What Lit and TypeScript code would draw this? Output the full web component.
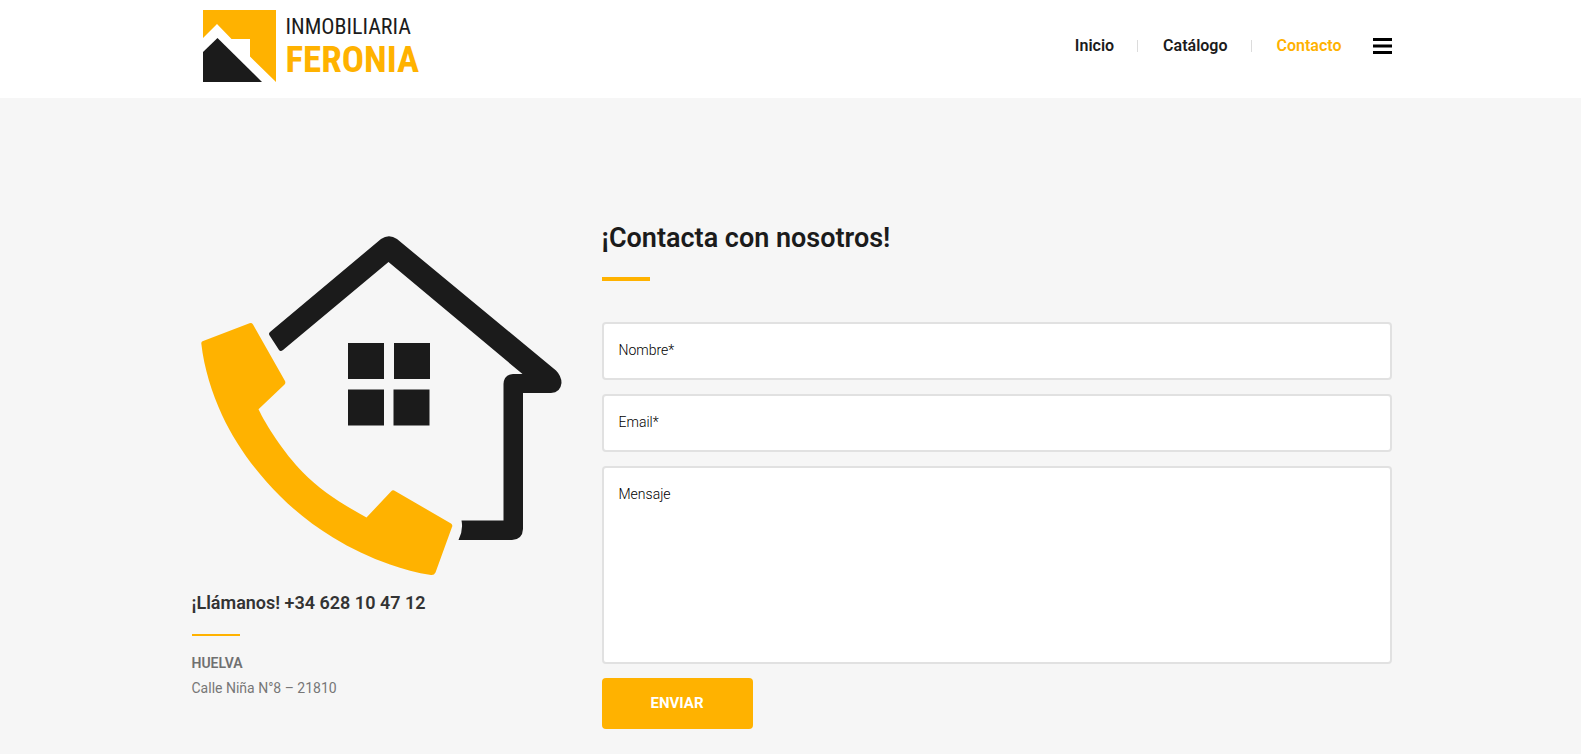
import { LitElement, html, css } from "lit";
import { customElement } from "lit/decorators.js";

@customElement("site-logo")
class SiteLogo extends LitElement {
  static styles = css`
    :host {
      display: block;
    }
    .logo {
      display: flex;
      align-items: center;
      gap: 10px;
      padding-left: 11px;
      text-decoration: none;
    }
    .mark {
      display: block;
      width: 73px;
      height: 72px;
    }
    .words {
      display: flex;
      flex-direction: column;
      font-family: "Liberation Sans Narrow", "Arial Narrow", "Roboto Condensed", Roboto, sans-serif;
      white-space: nowrap;
    }
    .top {
      font-size: 22px;
      line-height: 28px;
      color: #1b1b1b;
    }
    .name {
      font-size: 37px;
      line-height: 38px;
      font-weight: 700;
      color: #ffb200;
    }
  `;

  render() {
    return html`
      <a class="logo" href="#inicio">
        <svg class="mark" viewBox="0 0 73 72" aria-hidden="true">
          <path fill="#ffb200" d="M0 0H73V72L47 46.500V29H28.500L14 14L0 28Z" />
          <path fill="#1b1b1b" d="M0 42L14.500 28L59 72H0Z" />
        </svg>
        <span class="words">
          <span class="top">INMOBILIARIA</span>
          <span class="name">FERONIA</span>
        </span>
      </a>
    `;
  }
}

@customElement("house-phone")
class HousePhone extends LitElement {
  static styles = css`
    :host {
      display: block;
    }
    .art {
      display: block;
      width: 100%;
      height: auto;
    }
  `;

  render() {
    return html`
      <svg class="art" viewBox="192 230 370 350" role="img" aria-label="Casa y teléfono">
        <path
          fill="#1b1b1b"
          d="M270 332L381 239Q389 233.500 397 239L556 370.500Q561.500 376 561.500 383Q560.500 392.500 551 393H523V529Q522.500 539.500 512 540H458.500Q463.500 530 461.500 520.500H503.500V384Q504 374.500 513 374H522.500L388.500 262L283 350Q280.500 352 279 350L269.300 335Q268.500 333.300 270 332Z"
        />
        <path
          fill="#1b1b1b"
          d="M348 343H384V379H348ZM394 343H430V379H394ZM348 389.500H384V425.500H348ZM393.500 389.500H429.500V425.500H393.500Z"
        />
        <path
          fill="#ffb200"
          d="M202.500 341.300L249.500 323.300Q251.700 322.600 253 324.500L285 381Q286 383 284.300 384.800L258.500 409.300C266 425 283 452 303 472.500C320 490 342 504 366.500 517.500L391 491.500Q392.800 489.500 395 491L451 523.500Q453 525 452 527L435.500 572.500Q434 575.500 431 575C417 573 403 569 390 564.500C370 557.500 351 548.500 333 537.500C314 526 296 512 280 496C256 472 236 445 222 415C212 393 204 368 201.300 343.500Q201.200 342 202.500 341.300Z"
        />
      </svg>
    `;
  }
}

@customElement("app-root")
class AppRoot extends LitElement {
  static styles = css`
    :host {
      display: flex;
      flex-direction: column;
      min-height: 100vh;
      background: #f6f6f6;
      color: #1b1b1b;
      font-family: Roboto, sans-serif;
      font-size: 14px;
    }
    * {
      box-sizing: border-box;
    }
    .header {
      padding: 10px 0 16px 2px;
      background: #ffffff;
    }
    .main {
      padding: 120px 0 24px 2px;
    }
    .container {
      max-width: 1200px;
      margin: 0 auto;
    }
    .bar {
      display: flex;
      justify-content: space-between;
      align-items: center;
    }
    .nav {
      display: flex;
      align-items: center;
    }
    .link {
      font-size: 16px;
      line-height: 24px;
      font-weight: 600;
      color: #1b1b1b;
      text-decoration: none;
    }
    .link.active {
      color: #ffb200;
    }
    .sep {
      width: 1px;
      height: 12px;
      margin: 0 25px 0 23px;
      background: #dcdcdc;
    }
    .menu {
      display: block;
      margin-left: 31px;
      padding: 0;
      border: 0;
      background: none;
      cursor: pointer;
    }
    .menu-icon {
      display: block;
      width: 19px;
      height: 16px;
    }
    .columns {
      display: grid;
      grid-template-columns: 37fr 79fr;
      gap: 40px;
    }
    .info {
      padding-top: 12px;
    }
    .phone {
      margin: 10px 0 0;
      font-size: 18px;
      line-height: 26px;
      font-weight: 600;
      color: #333333;
    }
    .rule {
      width: 48px;
      height: 2px;
      margin: 18px 0 15px;
      background: #ffb200;
    }
    .address {
      margin: 0;
      font-style: normal;
      line-height: 25px;
      color: #777777;
    }
    .city {
      display: block;
      font-weight: 600;
      color: #707070;
    }
    .title {
      margin: 0;
      font-size: 27px;
      line-height: 40px;
      font-weight: 600;
    }
    .title-rule {
      width: 48px;
      height: 4px;
      margin: 19px 0 41px;
      background: #ffb200;
    }
    .form {
      display: flex;
      flex-direction: column;
      align-items: flex-start;
      gap: 14px;
    }
    .row {
      display: block;
      width: 100%;
    }
    .field {
      display: block;
      width: 100%;
      height: 58px;
      padding: 14px 15px 16px;
      border: 2px solid #e1e1e1;
      border-radius: 4px;
      background: #ffffff;
      color: #000000;
      font-family: inherit;
      font-size: 14px;
      line-height: 24px;
      font-weight: 300;
      resize: none;
      outline: none;
    }
    .field::placeholder {
      color: #000000;
      opacity: 1;
    }
    .area {
      height: 198px;
    }
    .send {
      padding: 15px 49px;
      border: 0;
      border-radius: 4px;
      background: #ffb200;
      color: #ffffff;
      font-family: inherit;
      font-size: 15px;
      line-height: 21px;
      font-weight: 700;
      cursor: pointer;
    }
  `;

  render() {
    return html`
      <header class="header">
        <div class="container bar">
          <site-logo></site-logo>
          <nav class="nav">
            <a class="link" href="#inicio">Inicio</a>
            <span class="sep"></span>
            <a class="link" href="#catalogo">Catálogo</a>
            <span class="sep"></span>
            <a class="link active" href="#contacto" aria-current="page">Contacto</a>
            <button class="menu" type="button" aria-label="Menú">
              <svg class="menu-icon" viewBox="0 0 19 16" aria-hidden="true">
                <path fill="#000000" d="M0 0H19V3H0ZM0 6.500H19V9.500H0ZM0 13H19V16H0Z" />
              </svg>
            </button>
          </nav>
        </div>
      </header>
      <main class="main">
        <div class="container columns">
          <section class="info">
            <house-phone></house-phone>
            <h2 class="phone">¡Llámanos! +34 628 10 47 12</h2>
            <div class="rule"></div>
            <address class="address"><strong class="city">HUELVA</strong>Calle Niña N°8 – 21810</address>
          </section>
          <section>
            <h1 class="title">¡Contacta con nosotros!</h1>
            <div class="title-rule"></div>
            <form class="form" @submit=${(e: Event) => e.preventDefault()}>
              <label class="row"><input class="field" type="text" name="nombre" placeholder="Nombre*" aria-label="Nombre" /></label>
              <label class="row"><input class="field" type="email" name="email" placeholder="Email*" aria-label="Email" /></label>
              <label class="row"><textarea class="field area" name="mensaje" placeholder="Mensaje" aria-label="Mensaje"></textarea></label>
              <button class="send" type="submit">ENVIAR</button>
            </form>
          </section>
        </div>
      </main>
    `;
  }
}
